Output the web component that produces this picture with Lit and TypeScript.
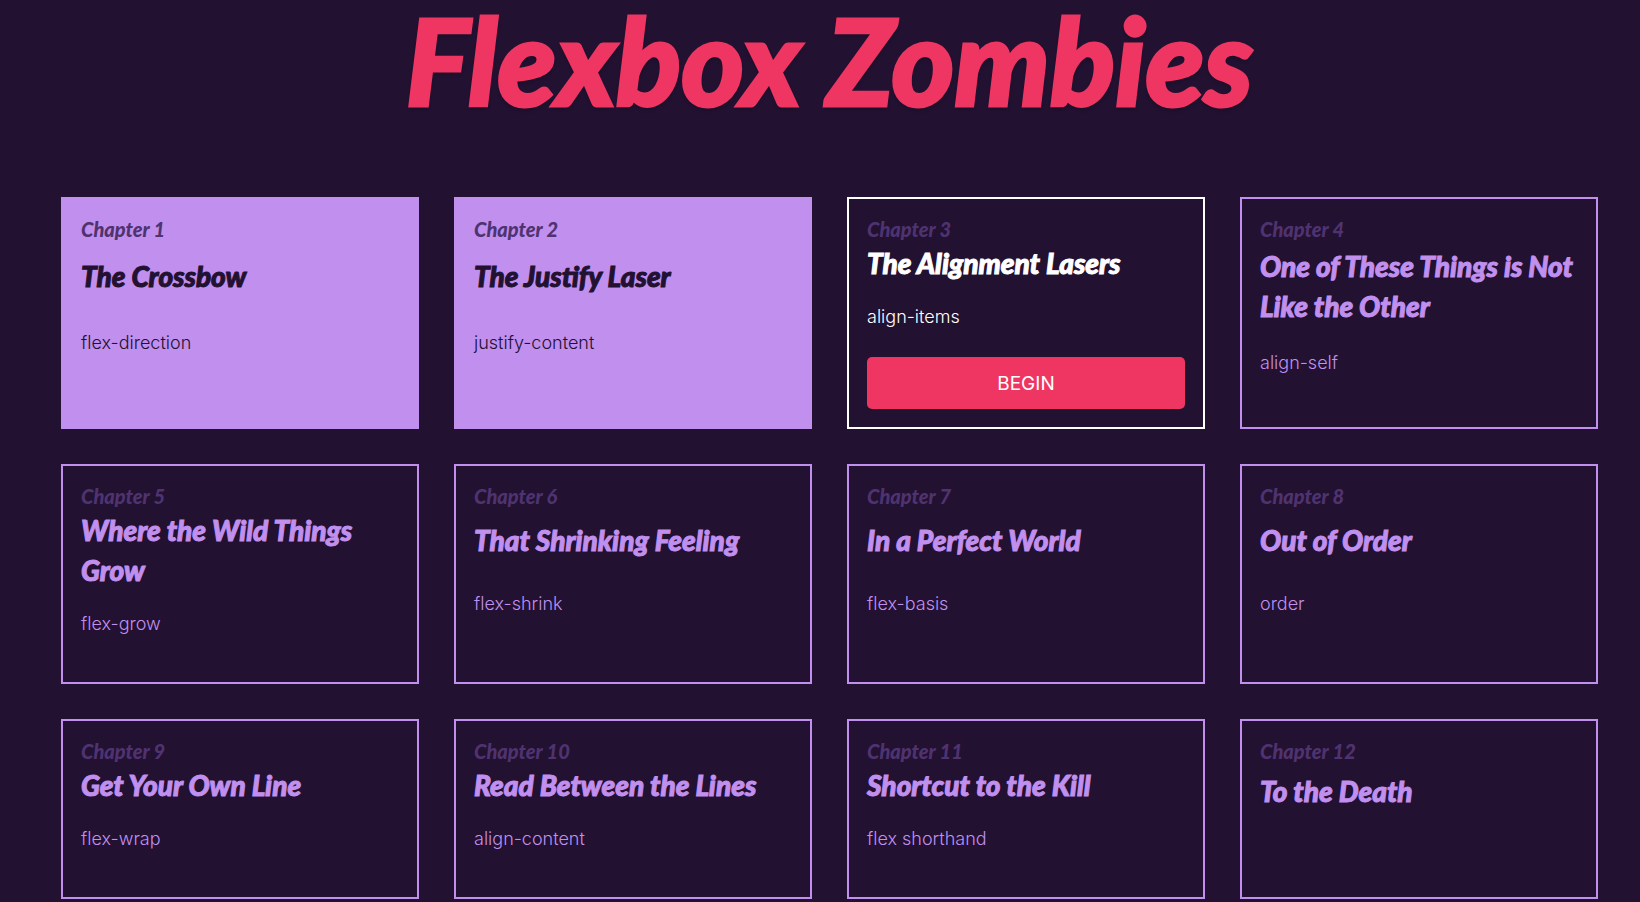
import { LitElement, html, css, nothing } from "lit";
import { customElement, property } from "lit/decorators.js";

type Status = "done" | "current" | "locked";

interface Chapter {
  title: string;
  topic: string;
}

const CURRENT = 3;

const CHAPTERS: Chapter[] = [
  { title: "The Crossbow", topic: "flex-direction" },
  { title: "The Justify Laser", topic: "justify-content" },
  { title: "The Alignment Lasers", topic: "align-items" },
  { title: "One of These Things is Not Like the Other", topic: "align-self" },
  { title: "Where the Wild Things Grow", topic: "flex-grow" },
  { title: "That Shrinking Feeling", topic: "flex-shrink" },
  { title: "In a Perfect World", topic: "flex-basis" },
  { title: "Out of Order", topic: "order" },
  { title: "Get Your Own Line", topic: "flex-wrap" },
  { title: "Read Between the Lines", topic: "align-content" },
  { title: "Shortcut to the Kill", topic: "flex shorthand" },
  { title: "To the Death", topic: "" },
];

@customElement("chapter-card")
export class ChapterCard extends LitElement {
  @property({ type: Number }) number = 1;
  @property() name = "";
  @property() topic = "";
  @property({ reflect: true }) status: Status = "locked";

  static styles = css`
    :host {
      display: flex;
      box-sizing: border-box;
      padding: 18px;
      border: 2px solid #c18fee;
      color: #c18fee;
    }
    :host([status="done"]) {
      background: #c18fee;
      color: #221131;
    }
    :host([status="current"]) {
      border-color: #fff;
      color: #fff;
    }
    .card {
      flex: 1;
      min-width: 0;
      display: flex;
      flex-direction: column;
    }
    .chapter,
    .title {
      margin: 0;
      font-family: Lato, "Open Sans", sans-serif;
      font-style: italic;
      font-weight: 900;
    }
    .chapter {
      font-size: 20px;
      line-height: 24px;
      padding-bottom: 2px;
      color: #4f3370;
    }
    .body {
      flex: 1;
      display: flex;
      flex-direction: column;
      justify-content: space-evenly;
    }
    .title {
      font-size: 28px;
      line-height: 40px;
      -webkit-text-stroke: 1px currentColor;
    }
    .topic {
      margin: 18px 0 24px;
      font-size: 18px;
      line-height: 32px;
      font-weight: 350;
    }
    :host([status="done"]) .topic {
      font-weight: 300;
    }
    .topic:empty {
      margin-bottom: 32px;
    }
    .begin {
      width: 100%;
      height: 52px;
      padding: 2px 0 0;
      border: 0;
      border-radius: 5px;
      background: #ef3662;
      color: #fff;
      font: 400 19px/24px Inter, sans-serif;
      cursor: pointer;
    }
  `;

  render() {
    return html`
      <article class="card">
        <p class="chapter">Chapter ${this.number}</p>
        <div class="body">
          <h2 class="title">${this.name}</h2>
          <p class="topic">${this.topic || nothing}</p>
          <div class="action">
            ${this.status === "current"
              ? html`<button class="begin" type="button">BEGIN</button>`
              : nothing}
          </div>
        </div>
      </article>
    `;
  }
}

@customElement("app-root")
export class AppRoot extends LitElement {
  static styles = css`
    :host {
      display: block;
      min-height: 100vh;
      box-sizing: border-box;
      padding: 0 42px 3px 61px;
      background: #221131;
      font-family: Inter, sans-serif;
    }
    .heading {
      margin: 0 0 77px;
      font: italic 900 120px/120px Lato, "Open Sans", sans-serif;
      text-align: center;
      color: #ef3662;
      -webkit-text-stroke: 3px #ef3662;
      text-shadow: 0 3px 4px rgba(0, 0, 0, 0.2);
    }
    .chapters {
      display: grid;
      grid-template-columns: repeat(4, minmax(0, 1fr));
      gap: 35px;
    }
    @media (max-width: 1100px) {
      .chapters {
        grid-template-columns: repeat(2, minmax(0, 1fr));
      }
    }
  `;

  render() {
    return html`
      <main>
        <h1 class="heading">Flexbox Zombies</h1>
        <section class="chapters">
          ${CHAPTERS.map((chapter, i) => {
            const number = i + 1;
            const status: Status =
              number < CURRENT ? "done" : number === CURRENT ? "current" : "locked";
            return html`<chapter-card
              .number=${number}
              .name=${chapter.title}
              .topic=${chapter.topic}
              .status=${status}
            ></chapter-card>`;
          })}
        </section>
      </main>
    `;
  }
}
